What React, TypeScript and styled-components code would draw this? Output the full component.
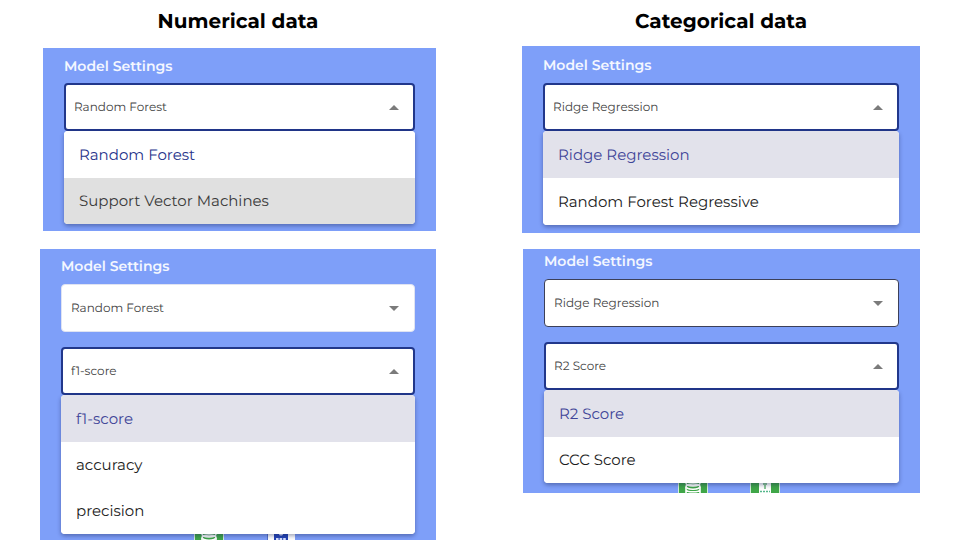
import React, { useId, useState } from "react";
import styled, { createGlobalStyle } from "styled-components";

const GlobalStyle = createGlobalStyle`
  *, *::before, *::after { box-sizing: border-box; }
  body {
    margin: 0;
    background: #fff;
    font-family: "Montserrat", "Inter", sans-serif;
    text-rendering: geometricPrecision;
  }
`;

const Page = styled.main`
  display: grid;
  grid-template-columns: 1fr 1fr;
  min-height: 100vh;
`;

const Column = styled.section<{ $side: "left" | "right" }>`
  display: flex;
  flex-direction: column;
  padding: ${(p) => (p.$side === "left" ? "0 44px 0 40px" : "0 40px 0 42px")};
`;

const Heading = styled.h1<{ $space: number }>`
  margin: 9px 0 ${(p) => p.$space}px;
  font-size: 20px;
  line-height: 26px;
  font-weight: 700;
  text-align: center;
  color: #000;
`;

const Panel = styled.div<{ $top: number; $inset?: number; $fill?: boolean }>`
  display: flex;
  flex-direction: column;
  flex: ${(p) => (p.$fill ? "1 0 auto" : "0 0 auto")};
  margin-left: ${(p) => p.$inset ?? 0}px;
  padding: ${(p) => p.$top}px 21px 0;
  background: #7e9ff9;
`;

const Spacer = styled.div<{ $size: number }>`
  flex: 0 0 ${(p) => p.$size}px;
`;

const PanelTitle = styled.h2<{ $space: number }>`
  margin: 0 0 ${(p) => p.$space}px;
  font-size: 14px;
  line-height: 18px;
  font-weight: 600;
  color: #f4f7ff;
`;

const SelectBox = styled.div<{ $look: "open" | "light" | "dark" }>`
  position: relative;
  height: 48px;
  border-radius: 4px;
  background: #fff;
  border: ${(p) =>
    p.$look === "open" ? "2px solid #21378b" : p.$look === "dark" ? "1px solid #3c4059" : "1px solid #dfe3f2"};
`;

const NativeSelect = styled.select<{ $open: boolean }>`
  display: block;
  width: 100%;
  height: 100%;
  padding: 1px 32px 0 ${(p) => (p.$open ? 8 : 9)}px;
  border: 0;
  border-radius: 4px;
  outline: none;
  appearance: none;
  background: transparent;
  font-family: inherit;
  font-size: 12px;
  text-rendering: inherit;
  color: #444;
`;

const Arrow = styled.svg<{ $open: boolean }>`
  position: absolute;
  top: 50%;
  right: ${(p) => (p.$open ? 14 : 15)}px;
  width: 10px;
  height: 5px;
  margin-top: -2px;
  fill: #7b7b7b;
  pointer-events: none;
`;

const Menu = styled.ul`
  z-index: 1;
  margin: 0;
  padding: 0;
  list-style: none;
  overflow: hidden;
  border-radius: 4px;
  background: #fff;
  box-shadow: 0 2px 4px rgba(20, 30, 80, 0.4);
`;

const Option = styled.button<{ $tint: string; $color: string; $tall: boolean }>`
  display: block;
  width: 100%;
  height: ${(p) => (p.$tall ? 47 : 46)}px;
  padding: 0 15px;
  border: 0;
  background: ${(p) => p.$tint};
  font-family: inherit;
  font-size: 15px;
  text-rendering: inherit;
  line-height: 24px;
  text-align: left;
  color: ${(p) => p.$color};
`;

const Tiles = styled.div<{ $height: number }>`
  display: flex;
  justify-content: center;
  gap: 42px;
  height: ${(p) => p.$height}px;
  padding-left: 14px;
  overflow: hidden;
`;

const Tile = styled.svg`
  flex: none;
  width: 30px;
  height: 10px;
`;

function DatabaseTile() {
  return (
    <Tile viewBox="0 0 30 10" aria-hidden="true">
      <rect width="30" height="10" fill="#d5efdc" />
      <rect x="1" width="28" height="10" fill="#3fa648" />
      <g fill="none" stroke="#fff" strokeWidth="1.6">
        <path d="M8 0 C8 3.8 22 3.8 22 0" />
        <ellipse cx="15" cy="3.6" rx="7" ry="2.6" />
        <path d="M8 4v6M22 4v6M8 7c1 2.4 13 2.4 14 0" />
      </g>
    </Tile>
  );
}

function SheetTile() {
  return (
    <Tile viewBox="0 0 30 10" aria-hidden="true">
      <rect width="30" height="10" fill="#d5efdc" />
      <rect x="1" width="28" height="10" fill="#3fa648" />
      <rect x="9" width="12" height="10" fill="#fff" />
      <path d="M15 0v6M13 1h4" stroke="#8cc997" strokeWidth="2" />
      <path d="M10 8.5h10" stroke="#55b78b" strokeWidth="1.5" strokeDasharray="2 1" />
    </Tile>
  );
}

function ChipTile() {
  return (
    <Tile viewBox="0 0 30 10" aria-hidden="true">
      <rect x="1" width="28" height="10" fill="#fff" />
      <path d="M1.5 0v10" stroke="#526fc9" />
      <rect x="8" width="14" height="10" fill="#2343b5" />
      <path d="M13 0c0 2 4 2 4 0" fill="#dbe3ff" />
      <path d="M10 5h10" stroke="#dbe3ff" strokeWidth="2" strokeDasharray="2.6 1" />
    </Tile>
  );
}

const SELECTED = "#e2e2eb";
const HOVERED = "#e0e0e0";

type FieldProps = {
  label: string;
  options: string[];
  look?: "open" | "light" | "dark";
  hovered?: string;
  tall?: number[];
};

function SelectField({ label, options, look = "open", hovered, tall = [] }: FieldProps) {
  const id = useId();
  const [value, setValue] = useState(options[0]);
  const open = look === "open";
  const optionTint = (o: string) => {
    if (hovered) return o === hovered ? HOVERED : "#fff";
    return o === value ? SELECTED : "#fff";
  };
  const optionColor = (o: string) => {
    if (o === value) return hovered ? "#27348b" : "#3f4598";
    return o === hovered ? "#3a3a3a" : "#1c1c1c";
  };
  return (
    <>
      <SelectBox $look={look}>
        <NativeSelect
          id={id}
          aria-label={label}
          $open={open}
          value={value}
          onChange={(e) => setValue(e.target.value)}
        >
          {options.map((o) => (
            <option key={o}>{o}</option>
          ))}
        </NativeSelect>
        <Arrow $open={open} viewBox="0 0 10 5" aria-hidden="true">
          <path d={open ? "M0 5 5 0l5 5z" : "M0 0l5 5 5-5z"} />
        </Arrow>
      </SelectBox>
      {open && (
        <Menu aria-label={label}>
          {options.map((o, i) => (
            <li key={o}>
              <Option
                type="button"
                aria-pressed={o === value}
                $tall={tall.includes(i)}
                $tint={optionTint(o)}
                $color={optionColor(o)}
                onClick={() => setValue(o)}
              >
                {o}
              </Option>
            </li>
          ))}
        </Menu>
      )}
    </>
  );
}

export default function App() {
  return (
    <>
      <GlobalStyle />
      <Page>
        <Column $side="left">
          <Heading $space={13}>Numerical data</Heading>
          <Panel $top={9} $inset={3}>
            <PanelTitle $space={8}>Model Settings</PanelTitle>
            <SelectField
              label="Model"
              options={["Random Forest", "Support Vector Machines"]}
              hovered="Support Vector Machines"
              tall={[0]}
            />
            <Spacer $size={7} />
          </Panel>
          <Spacer $size={18} />
          <Panel $top={8} $fill>
            <PanelTitle $space={9}>Model Settings</PanelTitle>
            <SelectField label="Model" options={["Random Forest", "Support Vector Machines"]} look="light" />
            <Spacer $size={15} />
            <SelectField label="Metric" options={["f1-score", "accuracy", "precision"]} tall={[0]} />
            <Tiles $height={6}>
              <DatabaseTile />
              <ChipTile />
            </Tiles>
          </Panel>
        </Column>
        <Column $side="right">
          <Heading $space={11}>Categorical data</Heading>
          <Panel $top={10}>
            <PanelTitle $space={9}>Model Settings</PanelTitle>
            <SelectField
              label="Model"
              options={["Ridge Regression", "Random Forest Regressive"]}
              tall={[0, 1]}
            />
            <Spacer $size={8} />
          </Panel>
          <Spacer $size={16} />
          <Panel $top={3} $inset={1}>
            <PanelTitle $space={9}>Model Settings</PanelTitle>
            <SelectField label="Model" options={["Ridge Regression", "Random Forest Regressive"]} look="dark" />
            <Spacer $size={15} />
            <SelectField label="Metric" options={["R2 Score", "CCC Score"]} tall={[0]} />
            <Tiles $height={10}>
              <DatabaseTile />
              <SheetTile />
            </Tiles>
          </Panel>
        </Column>
      </Page>
    </>
  );
}
